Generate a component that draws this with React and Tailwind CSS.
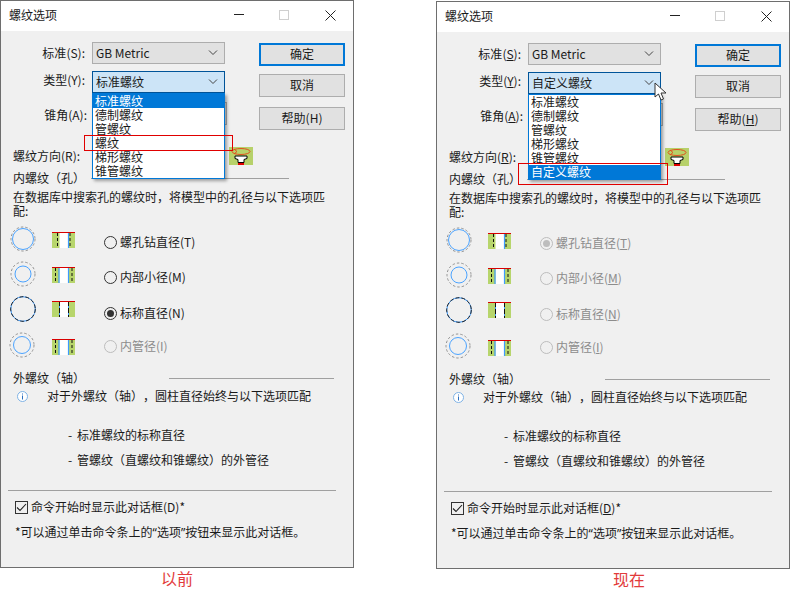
import React from "react";

const FONT = "font-['Noto_Sans_CJK_SC','Noto_Sans',sans-serif]";
const TYPES = ["标准螺纹", "德制螺纹", "管螺纹", "梯形螺纹", "锥管螺纹"];

function Acc({ k, u }) {
  return (
    <>
      (<span className={u ? "underline" : ""}>{k}</span>)
    </>
  );
}

function Chevron() {
  return (
    <svg width="10" height="6" viewBox="0 0 10 6" fill="none" stroke="#444" strokeWidth="1">
      <path d="M1 0.5 L5 4.5 L9 0.5" />
    </svg>
  );
}

function Combo({ value, active, className = "" }) {
  return (
    <div
      className={`flex items-center justify-between w-[133px] pl-[3px] pr-[6px] border ${
        active ? "border-[#005499] bg-[#cce4f7]" : "border-[#adadad] bg-[#e1e1e1]"
      } ${className}`}
    >
      <span>{value}</span>
      <Chevron />
    </div>
  );
}

function Btn({ children, primary, className = "" }) {
  return (
    <div
      className={`w-[86px] flex items-center justify-center pb-[2px] bg-[#e1e1e1] ${
        primary ? "border-2 border-[#0078d7]" : "border border-[#adadad]"
      } ${className}`}
    >
      {children}
    </div>
  );
}

function ThreadCircle({ r, cx = 15, dark }) {
  return (
    <svg width="30" height="28" viewBox="0 0 30 28" fill="none" className="shrink-0">
      {dark ? (
        <>
          <circle cx="15" cy="14" r="12.3" stroke="#3d9bff" strokeWidth="1" />
          <circle cx="15" cy="14" r="12.3" stroke="#222" strokeWidth="1" strokeDasharray="4 2" />
        </>
      ) : (
        <>
          <circle cx={cx} cy="14" r="12" stroke="#888" strokeWidth="0.9" strokeDasharray="2.5 2" />
          <circle cx={cx} cy="14" r={r} stroke="#4ba3ff" strokeWidth="1" />
        </>
      )}
    </svg>
  );
}

function ThreadRect({ type, className = "" }) {
  const dashed = { stroke: "#111", strokeWidth: 1, strokeDasharray: "3 2" };
  return (
    <svg width="23" height="16" viewBox="0 0 23 16" className={`shrink-0 ${className}`}>
      <rect x="0" y="0" width="23" height="16" fill="#b7d56c" />
      <rect x="7.5" y="0" width="9" height="16" fill="#fff" />
      {type === 3 && (
        <>
          <path d="M7.5 0V16M16.5 0V16" stroke="#3d9bff" strokeWidth="1" />
          <path d="M7.5 0V16M16.5 0V16" stroke="#111" strokeWidth="1" strokeDasharray="5 2" />
        </>
      )}
      {type === 1 && (
        <>
          <path d="M5.5 1V16M18 1V16" {...dashed} />
          <path d="M16.5 0V16" stroke="#3d9bff" strokeWidth="1.2" />
        </>
      )}
      {type === 2 && (
        <>
          <path d="M3.5 1V16M20 1V16" {...dashed} />
          <path d="M7 0V16M16.5 0V16" stroke="#3d9bff" strokeWidth="1.2" />
        </>
      )}
      <rect x="0" y="0" width="23" height="1" fill="#d80000" />
    </svg>
  );
}

function DirectionIcon() {
  return (
    <svg width="24" height="18" viewBox="0 0 24 18" className="shrink-0">
      <rect width="24" height="18" fill="#b7d16a" />
      <ellipse cx="12" cy="4.5" rx="9" ry="3" fill="none" stroke="#e2501e" strokeWidth="1" />
      <path d="M5 2 L8 4.5 L5 7" fill="none" stroke="#e2501e" strokeWidth="1" />
      <path d="M6 9 H18 V11.5 L15 12.5 V15.5 H9 V12.5 L6 11.5 Z" fill="#fff" stroke="#000" strokeWidth="1" />
      <rect x="9" y="16" width="6" height="2" fill="#e00000" />
    </svg>
  );
}

function Radio({ checked, disabled }) {
  return (
    <span
      className={`w-[13px] h-[13px] rounded-full border flex items-center justify-center shrink-0 bg-transparent ${
        disabled ? "border-[#bdbdbd]" : "border-[#333]"
      }`}
    >
      {checked && (
        <span className={`w-[7px] h-[7px] rounded-full ${disabled ? "bg-[#bdbdbd]" : "bg-[#333]"}`}></span>
      )}
    </span>
  );
}

function RadioRow({ circle, rectType, rectClass, radioClass, rowClass, label, k, u, checked, disabled }) {
  return (
    <div className={`flex items-center h-[26px] ${rowClass}`}>
      {circle}
      <ThreadRect type={rectType} className={`ml-[14px] ${rectClass}`} />
      <div className={`flex items-center ml-[29px] ${radioClass} ${disabled ? "text-[#8c8c8c]" : ""}`}>
        <Radio checked={checked} disabled={disabled} />
        <span className="ml-[3px]">
          {label}
          <Acc k={k} u={u} />
        </span>
      </div>
    </div>
  );
}

function Dialog({ custom }) {
  const u = custom;
  return (
    <div className="relative w-[354px] h-[568px] border border-[#6e6e6e] bg-[#f0f0f0] flex flex-col">
      <div className="h-[30px] bg-white flex items-center pl-[8px] pr-[17px] pb-[2px] shrink-0">
        <span>螺纹选项</span>
        <svg width="10" height="2" viewBox="0 0 10 2" className="ml-auto">
          <rect width="10" height="1" fill="#222" />
        </svg>
        <svg width="10" height="10" viewBox="0 0 10 10" fill="none" className="ml-[35px]">
          <rect x="0.5" y="0.5" width="9" height="9" stroke="#cfcfcf" />
        </svg>
        <svg width="11" height="11" viewBox="0 0 11 11" fill="none" stroke="#222" className="ml-[36px]">
          <path d="M0.5 0.5 L10.5 10.5 M10.5 0.5 L0.5 10.5" />
        </svg>
      </div>

      <div className="pl-[7px] flex-1">
        {/* form rows and the buttons */}
        <div className="flex h-[138px]">
          <div className="w-[258px] -ml-[7px] pt-[11px]">
            <div className="flex items-center h-[22px]">
              <span className="w-[84px] text-right">
                标准
                <Acc k="S" u={u} />:
              </span>
              <Combo value="GB Metric" className="ml-[7px] h-[22px]" />
            </div>
            <div className="flex items-center h-[22px] mt-[7px]">
              <span className="w-[84px] text-right -mt-[4px]">
                类型
                <Acc k="Y" u={u} />:
              </span>
              <div className="relative ml-[7px] z-10">
                <Combo value={custom ? "自定义螺纹" : "标准螺纹"} active className="h-[22px]" />
                <div className="absolute top-full left-0 w-[133px] bg-white border border-[#0078d7] shadow-[2px_2px_3px_rgba(0,0,0,0.35)]">
                  {(custom ? [...TYPES, "自定义螺纹"] : [TYPES[0], TYPES[1], TYPES[2], "螺纹", TYPES[3], TYPES[4]]).map(
                    (t) => {
                      const sel = t === (custom ? "自定义螺纹" : "标准螺纹");
                      return (
                        <div
                          key={t}
                          className={`h-[14px] leading-[14px] pl-[2px] ${sel ? "bg-[#0078d7] text-white" : ""}`}
                        >
                          {t}
                        </div>
                      );
                    }
                  )}
                </div>
              </div>
            </div>
            <div className="flex items-center h-[23px] mt-[9px]">
              <span className="w-[86px] text-right mt-[3px]">
                锥角
                <Acc k="A" u={u} />:
              </span>
              <Combo value="" className="ml-[5px] !w-[135px] h-[23px]" />
            </div>
          </div>
          <div className="pt-[12px] flex flex-col">
            <Btn primary className="h-[23px]">确定</Btn>
            <Btn className="h-[23px] mt-[8px]">取消</Btn>
            <Btn className="h-[23px] mt-[10px]">帮助<Acc k="H" u={u} /></Btn>
          </div>
        </div>

        <div className="flex items-center h-[18px] ml-[5px] -mt-[22px] relative">
          <span>
            螺纹方向
            <Acc k="R" u={u} />:
          </span>
          <span className="absolute left-[216px] top-0">
            <DirectionIcon />
          </span>
        </div>

        {/* internal thread */}
        <div className="flex items-center h-[16px] ml-[5px] mt-[5px] w-[276px]">
          <span>内螺纹（孔）</span>
          <span className="flex-1 h-px bg-[#a0a0a0] ml-[6px]"></span>
        </div>
        <p className="ml-[5px] mt-[4px] w-[316px] leading-[14px]">
          在数据库中搜索孔的螺纹时，将模型中的孔径与以下选项匹配:
        </p>
        <div className="mt-[8px]">
          <RadioRow
            circle={<ThreadCircle r={10.5} />}
            rectType={1}
            rectClass="mt-[2px]"
            radioClass="mt-[6px]"
            label="螺孔钻直径"
            k="T"
            u={u}
            checked={custom}
            disabled={custom}
          />
          <RadioRow
            circle={<ThreadCircle r={8} />}
            rectType={2}
            rectClass="mt-[2px]"
            radioClass="mt-[6px]"
            rowClass="mt-[9px]"
            label="内部小径"
            k="M"
            u={u}
            disabled={custom}
          />
          <RadioRow
            circle={<ThreadCircle dark />}
            rectType={3}
            radioClass="mt-[8px]"
            rowClass="mt-[9px]"
            label="标称直径"
            k="N"
            u={u}
            checked={!custom}
            disabled={custom}
          />
          <RadioRow
            circle={<ThreadCircle r={8.5} cx={14} />}
            rectType={2}
            rectClass="mt-[4px]"
            radioClass="mt-[2px]"
            rowClass="mt-[10px]"
            label="内管径"
            k="I"
            u={u}
            disabled
          />
        </div>

        {/* external thread */}
        <div className="flex items-center h-[16px] ml-[5px] mt-[12px] w-[321px]">
          <span>外螺纹（轴）</span>
          <span className="h-px bg-[#a0a0a0] ml-auto w-[165px]"></span>
        </div>
        <div className="flex items-center h-[14px] mt-[3px] ml-[9px]">
          <svg width="11" height="11" viewBox="0 0 11 11" fill="none" className="shrink-0">
            <circle cx="5.5" cy="5.5" r="5" stroke="#7fb2e5" fill="#fff" />
            <path d="M5.5 2.5V3.5M5.5 4.5V8.5" stroke="#2a6fc0" strokeWidth="1" />
          </svg>
          <span className="ml-[19px]">对于外螺纹（轴），圆柱直径始终与以下选项匹配</span>
        </div>
        <div className="ml-[60px] mt-[25px] h-[14px] leading-[14px]">
          <span className="inline-block w-[9px]">-</span>标准螺纹的标称直径
        </div>
        <div className="ml-[60px] mt-[11px] h-[14px] leading-[14px]">
          <span className="inline-block w-[9px]">-</span>管螺纹（直螺纹和锥螺纹）的外管径
        </div>

        <div className="h-px w-[328px] bg-[#a0a0a0] mt-[23px]"></div>
        <div className="flex items-center h-[14px] ml-[7px] mt-[9px]">
          <span className="w-[13px] h-[13px] border border-[#333] flex items-center justify-center shrink-0">
            <svg width="11" height="9" viewBox="0 0 11 9" fill="none" stroke="#222" strokeWidth="1.1">
              <path d="M1 4.5 L4 7.5 L10 1" />
            </svg>
          </span>
          <span className="ml-[3px]">
            命令开始时显示此对话框
            <Acc k="D" u={u} />*
          </span>
        </div>
        <div className="ml-[7px] mt-[11px] h-[14px] leading-[14px]">
          *可以通过单击命令条上的<span className="font-['Noto_Sans']">“</span>选项
          <span className="font-['Noto_Sans']">”</span>按钮来显示此对话框。
        </div>
      </div>

      {/* annotation frame and mouse pointer over the dropdown */}
      {custom ? (
        <div className="absolute left-[81px] top-[161px] w-[150px] h-[22px] border border-[#e00000] z-20"></div>
      ) : (
        <div className="absolute left-[83px] top-[134px] w-[149px] h-[16px] border border-[#e00000] z-20"></div>
      )}
      {custom && (
        <svg width="14" height="19" viewBox="0 0 14 19" className="absolute left-[217px] top-[80px] z-30">
          <path
            d="M1 1 V15 L4.5 12 L7 18 L9.5 17 L7 11 H12 Z"
            fill="#fff"
            stroke="#333"
            strokeWidth="1"
            strokeLinejoin="round"
          />
        </svg>
      )}
    </div>
  );
}

export default function App() {
  return (
    <div
      className={`w-[797px] h-[594px] bg-white text-[12px] leading-[16px] text-[#1a1a1a] flex [text-spacing-trim:space-all] [font-feature-settings:'chws'_0] ${FONT}`}
    >
      <div className="w-[354px]">
        <Dialog />
        <div className="text-center text-[16px] leading-[20px] text-[#e23b3b]">以前</div>
      </div>
      <div className="w-[354px] ml-[82px] pt-px">
        <Dialog custom />
        <div className="pl-[32px] text-center text-[16px] leading-[20px] text-[#e23b3b]">现在</div>
      </div>
    </div>
  );
}
